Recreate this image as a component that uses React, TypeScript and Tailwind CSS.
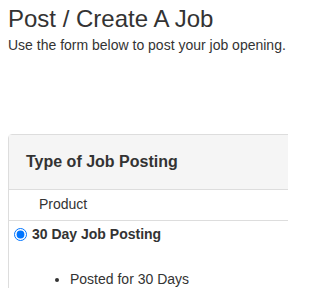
export default function App() {
  return (
    <div
      className="w-[288px] h-[288px] overflow-hidden bg-white text-[#333]"
      style={{ fontFamily: '"Liberation Sans", Arial, sans-serif' }}
    >
      <div className="px-[8px] pt-[6px]">
        <h1 className="text-[24px] leading-[26.4px] font-normal whitespace-nowrap">Post / Create A Job</h1>
        <p className="mt-[3px] text-[14px] leading-[20px] whitespace-nowrap">
          Use the form below to post your job opening.
        </p>
      </div>

      <div className="mt-[79px] ml-[8px] w-[400px] rounded-tl-[4px] border border-[#ddd]">
        <div className="bg-[#f5f5f5] border-b border-[#ddd] pl-[17px] py-[17px]">
          <h3 className="text-[16px] leading-[20px] font-bold">Type of Job Posting</h3>
        </div>
        <div className="border-b border-[#ddd] pl-[30px] pt-[4px] pb-[6px] text-[14px] leading-[20px]">
          Product
        </div>
        <div className="pt-[3px] text-[14px] leading-[20px]">
          <label className="flex items-center gap-[5px] pl-[5px] font-bold">
            <input type="radio" name="product" defaultChecked className="m-0 w-[13px] h-[13px]" />
            <span>30 Day Job Posting</span>
          </label>
          <ul className="list-disc pl-[61px] mt-[25px] pb-[20px]">
            <li>Posted for 30 Days</li>
          </ul>
        </div>
      </div>
    </div>
  );
}
